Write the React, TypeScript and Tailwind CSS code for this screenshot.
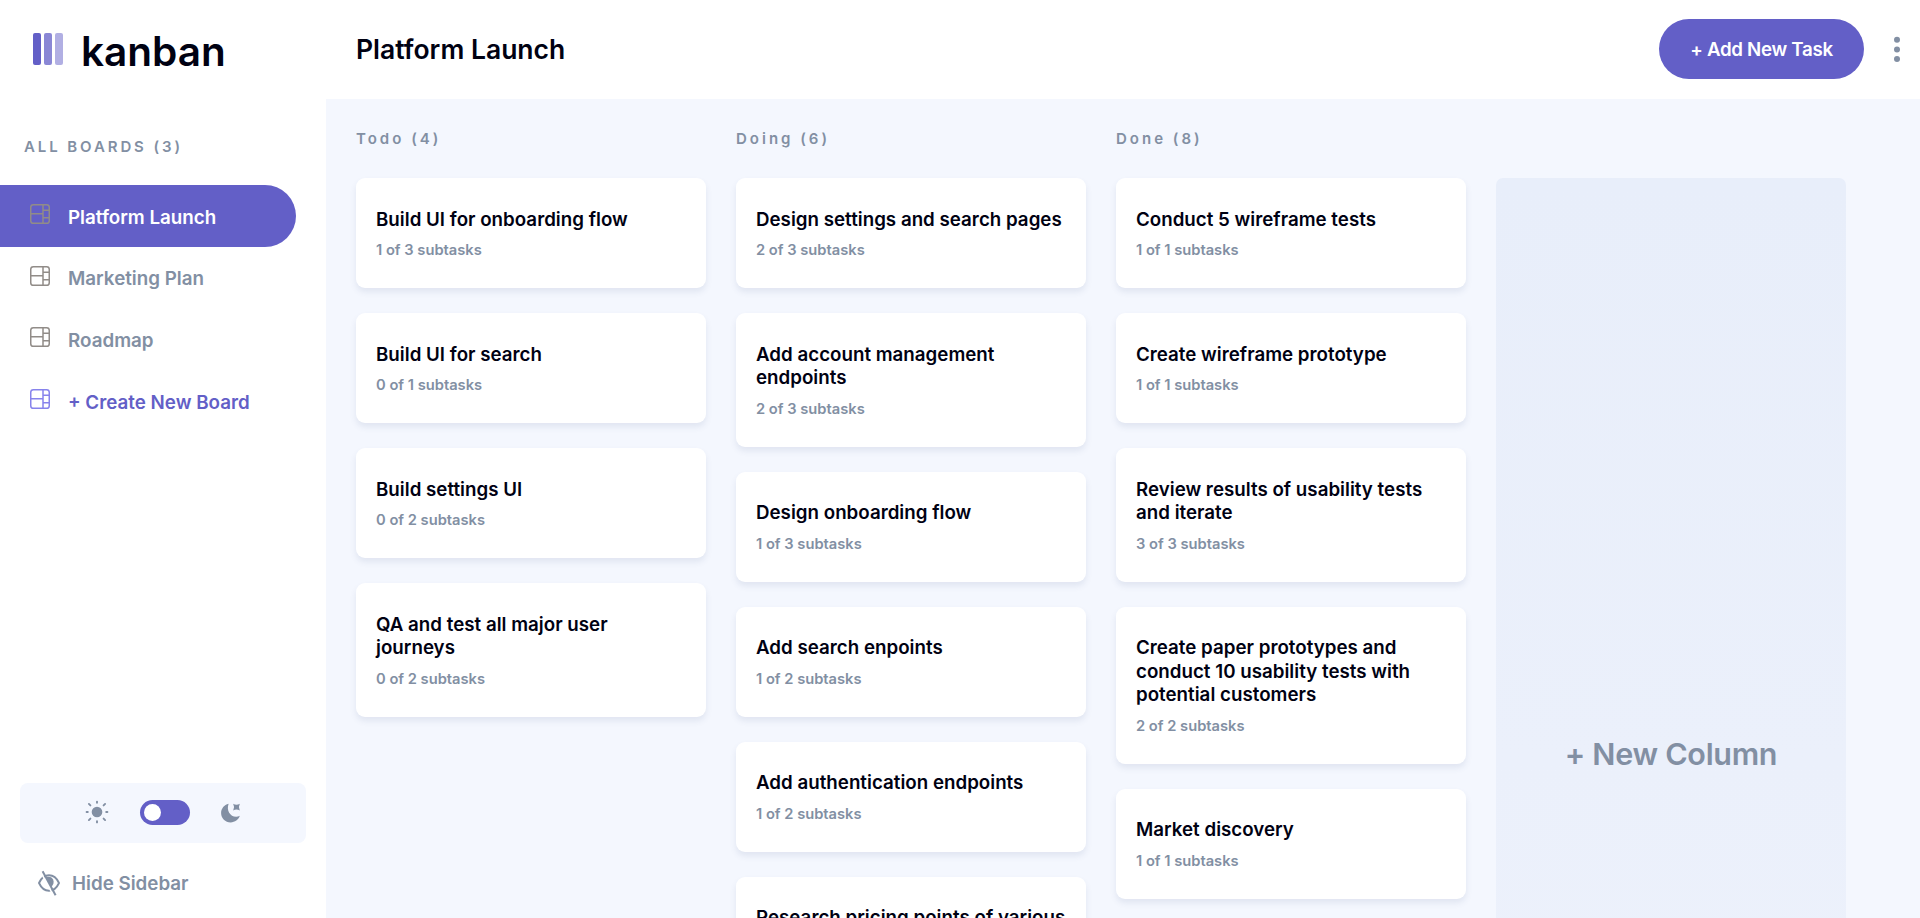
import React from "react";

type Task = { title: string; done: number; total: number };
type Column = { name: string; count: number; tasks: Task[] };

const columns: Column[] = [
  {
    name: "Todo",
    count: 4,
    tasks: [
      { title: "Build UI for onboarding flow", done: 1, total: 3 },
      { title: "Build UI for search", done: 0, total: 1 },
      { title: "Build settings UI", done: 0, total: 2 },
      { title: "QA and test all major user journeys", done: 0, total: 2 },
    ],
  },
  {
    name: "Doing",
    count: 6,
    tasks: [
      { title: "Design settings and search pages", done: 2, total: 3 },
      { title: "Add account management endpoints", done: 2, total: 3 },
      { title: "Design onboarding flow", done: 1, total: 3 },
      { title: "Add search enpoints", done: 1, total: 2 },
      { title: "Add authentication endpoints", done: 1, total: 2 },
      { title: "Research pricing points of various", done: 1, total: 3 },
    ],
  },
  {
    name: "Done",
    count: 8,
    tasks: [
      { title: "Conduct 5 wireframe tests", done: 1, total: 1 },
      { title: "Create wireframe prototype", done: 1, total: 1 },
      { title: "Review results of usability tests and iterate", done: 3, total: 3 },
      {
        title: "Create paper prototypes and conduct 10 usability tests with potential customers",
        done: 2,
        total: 2,
      },
      { title: "Market discovery", done: 1, total: 1 },
    ],
  },
];

function BoardIcon({ className }: { className: string }) {
  return (
    <svg className={className} width="20" height="20" viewBox="0 0 20 20" fill="none" stroke="currentColor" strokeWidth="1.5">
      <rect x="0.75" y="0.75" width="18.5" height="18.5" rx="2.6" />
      <path d="M13 .75v18.5M.75 9.75H13M13 6.25h6.25M13 13.75h6.25" />
    </svg>
  );
}

function SunIcon() {
  return (
    <svg width="24" height="24" viewBox="0 0 24 24" fill="none" stroke="currentColor" strokeWidth="1.9" strokeLinecap="round">
      <circle cx="12" cy="12" r="5.3" fill="currentColor" stroke="none" />
      <path d="M12 1.6v1.2M12 21.2v1.2M1.6 12h1.2M21.2 12h1.2M3.9 3.9l1.5 1.5M18.6 18.6l1.5 1.5M20.1 3.9l-1.5 1.5M5.4 18.6l-1.5 1.5" />
    </svg>
  );
}

function MoonIcon() {
  return (
    <svg width="20" height="20" viewBox="0 0 20 20" fill="currentColor">
      <path d="M7.6 .7C3.2 1.8 .1 5.4 .1 10c0 5.2 4.2 9.4 9.5 9.4 4.3 0 8-2.7 9.2-6.6-1.2.6-2.4.9-3.6.9C9 13.7 5.2 7.2 7.6 .7Z" />
      <path d="M12.2 .7Q15.4 2.6 18.8 .7Q17 4 18.8 7.4Q15.4 5.4 12.2 7.4Q14 4 12.2 .7Z" />
    </svg>
  );
}

function EyeOffIcon() {
  return (
    <svg width="24" height="26" viewBox="0 0 24 26" fill="none">
      <path
        d="M2 13C4.2 8.200 7.800 5.300 12 5.300S19.800 8.200 22 13C19.800 17.800 16.200 20.700 12 20.700S4.200 17.800 2 13Z"
        stroke="currentColor"
        strokeWidth="1.9"
        strokeLinejoin="round"
      />
      <path d="M8.500 7.500c2.800-1.200 6-.8 7.600 1.900 1.200 2.900.3 5.600-1.700 7Z" fill="currentColor" />
      <path d="M3.800 2.200l13 24" stroke="#fff" strokeWidth="1.600" />
      <path d="M5.600 1.200l13 24" stroke="currentColor" strokeWidth="2" />
    </svg>
  );
}

function NavItem({ label, variant }: { label: string; variant: "active" | "idle" | "create" }) {
  const box = variant === "active" ? "bg-[#635fc7] text-white" : variant === "create" ? "text-[#635fc7]" : "text-[#828fa3]";
  const icon = variant === "create" ? "text-[#8783ec]" : "text-[#918c88]";
  return (
    <li className={`flex h-[61.6px] w-[296px] items-center gap-[18px] rounded-r-full pl-[30px] ${box}`}>
      <BoardIcon className={`mb-[3.6px] shrink-0 ${icon}`} />
      <span className="pt-[4px] text-[18.8px] font-semibold leading-[24px]">{label}</span>
    </li>
  );
}

function Sidebar() {
  return (
    <aside className="flex h-full w-[326px] shrink-0 flex-col bg-white">
      <div className="flex h-[99px] items-start pl-[33px] pt-[27px]">
        <div className="mt-[6px] flex gap-[3px]">
          <span className="h-[32px] w-[8px] rounded-[2px] bg-[#635fc7]" />
          <span className="h-[32px] w-[8px] rounded-[2px] bg-[#635fc7]/75" />
          <span className="h-[32px] w-[8px] rounded-[2px] bg-[#635fc7]/50" />
        </div>
        <span className="ml-[18px] mt-px text-[40.5px] font-[560] leading-[48px] text-[#000112]">kanban</span>
      </div>
      <h4 className="mt-[38px] pl-[24px] text-[15px] font-semibold leading-[20px] tracking-[2.9px] text-[#828fa3]">
        ALL BOARDS (3)
      </h4>
      <ul className="mt-[28px]">
        <NavItem label="Platform Launch" variant="active" />
        <NavItem label="Marketing Plan" variant="idle" />
        <NavItem label="Roadmap" variant="idle" />
        <NavItem label="+ Create New Board" variant="create" />
      </ul>
      <div className="mt-auto pb-[22px] text-[#828fa3]">
        <div className="mx-[20px] flex h-[60px] items-center justify-center rounded-[8px] bg-[#f4f7fe] pb-px">
          <span className="-mt-px">
            <SunIcon />
          </span>
          <span className="ml-[31px] mr-[31px] flex h-[25px] w-[50px] items-center rounded-full bg-[#635fc7] pl-[4px]">
            <span className="h-[17px] w-[17px] rounded-full bg-white" />
          </span>
          <MoonIcon />
        </div>
        <div className="mt-[27px] flex h-[26px] items-center gap-[11px] pl-[37px]">
          <EyeOffIcon />
          <span className="pt-[2px] text-[18.8px] font-semibold leading-[24px]">Hide Sidebar</span>
        </div>
      </div>
    </aside>
  );
}

function TaskCard({ task }: { task: Task }) {
  return (
    <article className="rounded-[9px] bg-white px-[20px] pb-[29px] pt-[29.5px] shadow-[0_4px_6px_rgba(54,78,126,0.1)]">
      <h3 className="text-[18.72px] font-semibold leading-[23.5px] tracking-[0.02px] text-[#000112]">{task.title}</h3>
      <p className="mt-[10px] text-[14.7px] font-semibold leading-[18px] text-[#828fa3]">
        {task.done} of {task.total} subtasks
      </p>
    </article>
  );
}

export default function App() {
  return (
    <div className="flex h-screen overflow-hidden bg-[#f4f7fe] font-['Inter',sans-serif]">
      <Sidebar />
      <div className="flex min-w-0 flex-1 flex-col">
        <header className="flex h-[99px] shrink-0 items-center bg-white pb-px pl-[30px] pr-[20px]">
          <h1 className="text-[26.5px] font-[560] leading-[34px] text-[#000112]">Platform Launch</h1>
          <button className="ml-auto h-[60px] w-[205px] rounded-full bg-[#635fc7] pt-[2px] text-[18.72px] font-semibold tracking-[-0.3px] text-white">
            + Add New Task
          </button>
          <svg className="ml-[30px] text-[#828fa3]" width="6" height="26" viewBox="0 0 6 26" fill="currentColor">
            <circle cx="3" cy="3.800" r="3" />
            <circle cx="3" cy="13.400" r="3" />
            <circle cx="3" cy="23" r="3" />
          </svg>
        </header>
        <main className="flex min-h-0 flex-1 items-start gap-[30px] overflow-hidden pl-[30px] pt-[30px]">
          {columns.map((column) => (
            <section key={column.name} className="w-[350px] shrink-0">
              <h4 className="mb-[29px] text-[15px] font-semibold leading-[20px] tracking-[3px] text-[#828fa3]">
                {column.name} ({column.count})
              </h4>
              <div className="flex flex-col gap-[25px]">
                {column.tasks.map((task) => (
                  <TaskCard key={task.title} task={task} />
                ))}
              </div>
            </section>
          ))}
          <button className="mt-[49px] h-[1152px] w-[350px] shrink-0 rounded-[7px] bg-linear-to-b from-[#e8eefa] to-[#eef2fc] text-[30.5px] font-semibold tracking-[-0.3px] text-[#828fa3]">
            + New Column
          </button>
        </main>
      </div>
    </div>
  );
}
